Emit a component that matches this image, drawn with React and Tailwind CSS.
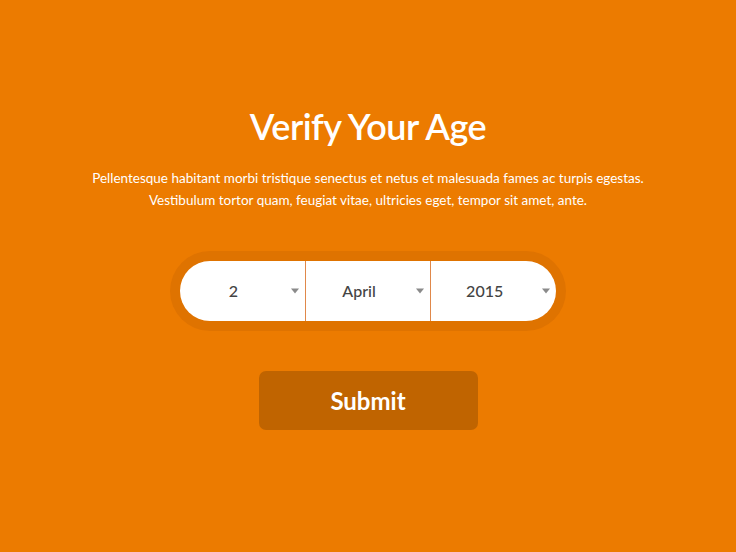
import React, { useState } from "react";

const days = Array.from({ length: 31 }, (_, i) => String(i + 1));
const months = [
  "January", "February", "March", "April", "May", "June",
  "July", "August", "September", "October", "November", "December",
];
const years = Array.from({ length: 100 }, (_, i) => String(2015 - i));

const Select = ({ value, options, onChange, last }) => (
  <div
    className={`relative flex-1 h-full ${last ? "" : "border-r border-[#e0884a]"}`}
  >
    <select
      value={value}
      onChange={(e) => onChange(e.target.value)}
      className="appearance-none w-full h-full bg-transparent text-center text-[16px] text-[#444] font-medium pr-[18px] outline-none cursor-pointer"
    >
      {options.map((o) => (
        <option key={o} value={o}>
          {o}
        </option>
      ))}
    </select>
    <span className="pointer-events-none absolute right-[6px] top-1/2 -translate-y-1/2 w-0 h-0 border-l-[4px] border-r-[4px] border-t-[5px] border-l-transparent border-r-transparent border-t-[#8a8a8a]" />
  </div>
);

const App = () => {
  const [day, setDay] = useState("2");
  const [month, setMonth] = useState("April");
  const [year, setYear] = useState("2015");

  return (
    <div
      className="w-full min-h-[552px] bg-[#ec7b00] flex flex-col items-center text-white"
      style={{ fontFamily: "Lato, 'Open Sans', sans-serif" }}
    >
      <h1 className="mt-[104px] text-[36px] leading-[44px] font-semibold tracking-[-0.5px]">
        Verify Your Age
      </h1>
      <p className="mt-[19px] text-[13.5px] leading-[22px] text-center">
        Pellentesque habitant morbi tristique senectus et netus et malesuada fames ac turpis egestas.
        <br />
        Vestibulum tortor quam, feugiat vitae, ultricies eget, tempor sit amet, ante.
      </p>

      <div className="mt-[40px] p-[10px] rounded-full bg-[#df7300]">
        <div className="w-[376px] h-[60px] bg-white rounded-full flex overflow-hidden">
          <Select value={day} options={days} onChange={setDay} />
          <Select value={month} options={months} onChange={setMonth} />
          <Select value={year} options={years} onChange={setYear} last />
        </div>
      </div>

      <button className="mt-[40px] w-[219px] h-[59px] rounded-[7px] bg-[#c06400] text-[24px] font-bold">
        Submit
      </button>
    </div>
  );
};

export default App;
